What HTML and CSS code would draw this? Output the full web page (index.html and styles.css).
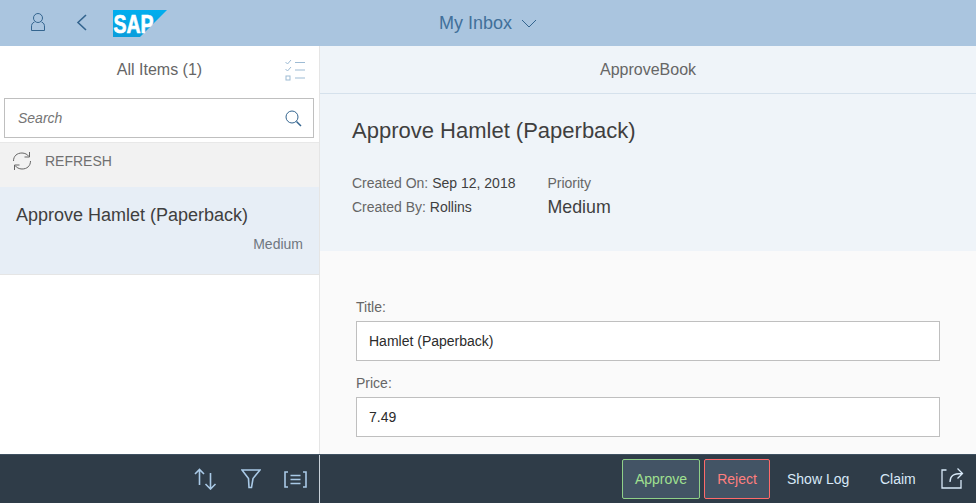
FILE: index.html
```html
<!DOCTYPE html>
<html lang="en">
<head>
    <meta charset="UTF-8">
    <title>My Inbox</title>
    <link rel="stylesheet" href="styles.css">
</head>
<body>
    <header class="shell">
        <div class="shell-left">
            <svg class="icon-user" width="18" height="20" viewBox="0 0 18 20" fill="none" stroke="#34658f" stroke-width="1">
                <circle cx="9" cy="6" r="4.5"/>
                <path d="M5.500 10C3 11 2.500 12.500 2.500 15V18.500H15.500V15C15.500 12.500 15 11 12.500 10"/>
            </svg>
            <svg class="icon-back" width="12" height="18" viewBox="0 0 12 18" fill="none" stroke="#34658f" stroke-width="1.600">
                <path d="M10 1L2 8.500L10 16"/>
            </svg>
            <svg class="logo" width="55" height="27" viewBox="0 0 55 27">
                <defs>
                    <linearGradient id="sapblue" x1="0" y1="0" x2="0" y2="1">
                        <stop offset="0" stop-color="#00aeef"/>
                        <stop offset="1" stop-color="#0a9ddb"/>
                    </linearGradient>
                </defs>
                <path d="M0 0H54L27 27H0Z" fill="url(#sapblue)"/>
                <text x="0.500" y="22.500" class="logo-text" textLength="40" lengthAdjust="spacingAndGlyphs">SAP</text>
            </svg>
        </div>
        <div class="shell-title">
            <span>My Inbox</span>
            <svg width="16" height="9" viewBox="0 0 16 9" fill="none" stroke="#34658f" stroke-width="1">
                <path d="M1 1L8 8L15 1"/>
            </svg>
        </div>
    </header>
    <div class="split">
        <aside class="master">
            <div class="master-head">
                <span class="master-title">All Items (1)</span>
                <svg class="icon-select" width="20" height="22" viewBox="0 0 20 22" fill="none" stroke="#9dbbd4" stroke-width="1">
                    <path d="M0.500 3L2.500 5L6 1"/>
                    <path d="M0.500 10L2.500 12L6 8"/>
                    <rect x="1" y="17" width="4" height="4"/>
                    <path d="M10 3.500H20M10 11H20M10 19H20"/>
                </svg>
            </div>
            <div class="search">
                <span class="search-text">Search</span>
                <svg width="17" height="17" viewBox="0 0 17 17" fill="none" stroke="#34658f">
                    <circle cx="7" cy="7" r="6" stroke-width="1"/>
                    <path d="M11.500 11.500L16 16" stroke-width="1.500"/>
                </svg>
            </div>
            <div class="refresh">
                <svg width="20" height="20" viewBox="0 0 20 20" fill="none" stroke="#666" stroke-width="1">
                    <path d="M1.500 10C1.500 5 5 2 10 2C13 2 15.500 3.500 17 5.500"/>
                    <path d="M17.500 1V6H12.500"/>
                    <path d="M18.500 10C18.500 15 15 18 10 18C7 18 4.500 16.500 3 14.500"/>
                    <path d="M2.500 19V14H7.500"/>
                </svg>
                <span>REFRESH</span>
            </div>
            <div class="item">
                <div class="item-title">Approve Hamlet (Paperback)</div>
                <div class="item-status">Medium</div>
            </div>
        </aside>
        <main class="detail">
            <div class="detail-bar">ApproveBook</div>
            <section class="object-head">
                <h1>Approve Hamlet (Paperback)</h1>
                <div class="object-attrs">
                    <div class="attr-col">
                        <div class="attr"><span class="attr-label">Created On:</span> Sep 12, 2018</div>
                        <div class="attr"><span class="attr-label">Created By:</span> Rollins</div>
                    </div>
                    <div class="attr-col">
                        <div class="attr attr-label">Priority</div>
                        <div class="attr-big">Medium</div>
                    </div>
                </div>
            </section>
            <section class="form">
                <label class="field-label">Title:</label>
                <div class="field">Hamlet (Paperback)</div>
                <label class="field-label">Price:</label>
                <div class="field">7.49</div>
            </section>
        </main>
    </div>
    <footer class="footer">
        <div class="footer-left">
            <svg width="24" height="22" viewBox="0 0 24 22" fill="none" stroke="#a9c9e6" stroke-width="1.600">
                <path d="M5.500 17V1.500M1 6L5.500 1.500L10 6"/>
                <path d="M16.500 5V21M11.500 16L16.500 21L21.500 16"/>
            </svg>
            <svg width="20" height="20" viewBox="0 0 20 20" fill="none" stroke="#a9c9e6" stroke-width="1.600">
                <path d="M1 1H19L12 9.500L10.500 18.500L8 18.500L7.500 9.500Z"/>
            </svg>
            <svg width="23" height="17" viewBox="0 0 23 17" fill="none" stroke="#a9c9e6" stroke-width="1.600">
                <path d="M4 1H1V16H4M19 1H22V16H19M6.500 4.500H16.500M6.500 8.500H16.500M6.500 12.500H16.500"/>
            </svg>
        </div>
        <div class="footer-right">
            <button class="btn btn-approve">Approve</button>
            <button class="btn btn-reject">Reject</button>
            <button class="btn btn-plain">Show Log</button>
            <button class="btn btn-plain btn-claim">Claim</button>
            <svg class="icon-share" width="23" height="22" viewBox="0 0 23 22" fill="none" stroke="#d8e9f8" stroke-width="1.300">
                <path d="M5.500 3H1V21H20V13"/>
                <path d="M9 15C9 9 12 6.500 21 6.500M16.500 1.500L21.500 6.500L16.500 11.500"/>
            </svg>
        </div>
    </footer>
</body>
</html>
```

FILE: styles.css
```css
* {
    box-sizing: border-box;
}
body {
    font-family: "Liberation Sans", Arial, sans-serif;
    margin: 0;
    width: 976px;
    height: 503px;
    overflow: hidden;
    display: flex;
    flex-direction: column;
    color: #3f3f3f;
    background-color: #fff;
}
.shell {
    height: 46px;
    flex: none;
    background-color: #aac5df;
    position: relative;
    display: flex;
    align-items: center;
    justify-content: center;
}
.shell-left {
    position: absolute;
    left: 29px;
    top: 10px;
    display: flex;
    align-items: flex-start;
}
.icon-user {
    margin-top: 2px;
}
.icon-back {
    margin: 4px 0 0 29px;
}
.logo {
    margin-left: 25px;
}
.logo-text {
    font-family: "Liberation Sans", Arial, sans-serif;
    font-size: 25px;
    font-weight: bold;
    fill: #fff;
    stroke: #fff;
    stroke-width: 0.7px;
}
.shell-title {
    display: flex;
    align-items: center;
    gap: 9px;
    font-size: 18px;
    color: #41709a;
}
.split {
    flex: 1;
    display: flex;
    min-height: 0;
}
.master {
    width: 320px;
    flex: none;
    border-right: 1px solid #e5e5e5;
    background-color: #fff;
}
.master-head {
    height: 48px;
    position: relative;
    display: flex;
    align-items: center;
    justify-content: center;
    font-size: 16px;
    color: #666;
}
.icon-select {
    position: absolute;
    right: 14px;
    top: 13px;
}
.search {
    margin: 4px 5px 4px 4px;
    height: 40px;
    border: 1px solid #bfbfbf;
    background-color: #fff;
    padding: 0 11px 0 13px;
    display: flex;
    align-items: center;
    justify-content: space-between;
}
.search-text {
    font-size: 14px;
    font-style: italic;
    color: #757575;
}
.refresh {
    height: 45px;
    background-color: #f2f2f2;
    border-top: 1px solid #e8e8e8;
    padding: 0 0 8px 12px;
    display: flex;
    align-items: center;
    gap: 13px;
    font-size: 14px;
    color: #707070;
}
.item {
    height: 88px;
    background-color: #e7eef6;
    border-bottom: 1px solid #e5e5e5;
    padding: 18px 16px 0;
}
.item-title {
    font-size: 18px;
    line-height: 21px;
}
.item-status {
    margin-top: 10px;
    text-align: right;
    font-size: 14px;
    color: #6f7780;
}
.detail {
    flex: 1;
    min-width: 0;
    background-color: #fafafa;
}
.detail-bar {
    height: 48px;
    background-color: #eff4f9;
    border-bottom: 1px solid #d5e1ec;
    display: flex;
    align-items: center;
    justify-content: center;
    font-size: 16px;
    color: #666;
}
.object-head {
    height: 157px;
    background-color: #eff4f9;
    padding: 24px 32px 0;
}
.object-head h1 {
    margin: 0;
    font-size: 22px;
    line-height: 26px;
    font-weight: normal;
}
.object-attrs {
    display: flex;
    gap: 32px;
    margin-top: 27px;
}
.attr {
    font-size: 14px;
    line-height: 24px;
}
.attr-label {
    color: #666;
}
.attr-big {
    font-size: 17.8px;
    line-height: 24px;
}
.form {
    padding: 45px 36px 0;
}
.field-label {
    display: block;
    font-size: 14px;
    line-height: 23px;
    padding-bottom: 2px;
    color: #666;
}
.field {
    height: 40px;
    border: 1px solid #bfbfbf;
    background-color: #fff;
    padding: 0 12px;
    margin-bottom: 11px;
    display: flex;
    align-items: center;
    font-size: 14px;
    color: #2b2b2b;
}
.footer {
    height: 49px;
    flex: none;
    background-color: #2f3c48;
    border-top: 1px solid #3f5161;
    display: flex;
}
.footer-left {
    width: 320px;
    flex: none;
    border-right: 1px solid #c9d1d9;
    padding-right: 12px;
    display: flex;
    align-items: center;
    justify-content: flex-end;
    gap: 23px;
}
.footer-right {
    flex: 1;
    display: flex;
    align-items: center;
    justify-content: flex-end;
    padding-right: 12px;
}
.btn {
    font-family: inherit;
    font-size: 14px;
    height: 40px;
    border-radius: 2px;
    background: none;
    border: 1px solid transparent;
    padding: 0;
    white-space: nowrap;
}
.btn-approve {
    width: 78px;
    background-color: #435465;
    border-color: #8fd088;
    color: #a0e090;
}
.btn-reject {
    width: 66px;
    margin-left: 4px;
    background-color: #435465;
    border-color: #ff6a6a;
    color: #ff7f7f;
}
.btn-plain {
    color: #d8e9f8;
    width: 62px;
    margin-left: 16px;
}
.btn-claim {
    width: 36px;
    margin-left: 31px;
}
.icon-share {
    margin-left: 26px;
    margin-bottom: 2px;
}
```
